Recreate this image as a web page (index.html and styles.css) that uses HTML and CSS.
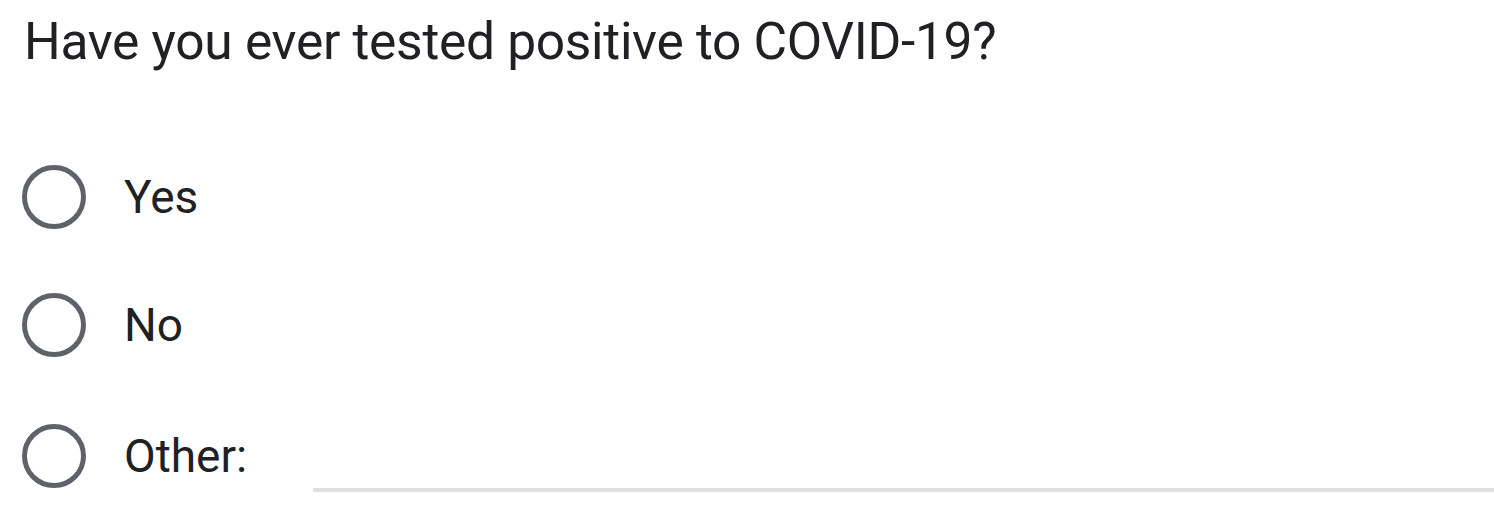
FILE: index.html
```html
<!DOCTYPE html>
<html>
<head>
<meta charset="utf-8">
<link rel="stylesheet" href="styles.css">
</head>
<body>
<div class="question">
  <div class="title">Have you ever tested positive to COVID-19?</div>
  <div class="options">
    <label class="option">
      <span class="radio"></span>
      <span class="label">Yes</span>
    </label>
    <label class="option">
      <span class="radio"></span>
      <span class="label">No</span>
    </label>
    <label class="option other">
      <span class="radio"></span>
      <span class="label">Other:</span>
      <span class="other-input"></span>
    </label>
  </div>
</div>
</body>
</html>
```

FILE: styles.css
```css
html, body {
  margin: 0;
  padding: 0;
  background: #ffffff;
}
body {
  font-family: Roboto, "Liberation Sans", sans-serif;
  color: #202124;
  width: 1494px;
  height: 530px;
  overflow: hidden;
}
.question {
  padding-left: 22px;
}
.title {
  font-size: 51.5px;
  line-height: 64px;
  padding-top: 10px;
  padding-left: 2px;
  letter-spacing: -0.3px;
}
.options {
  display: flex;
  flex-direction: column;
  margin-top: 91px;
}
.option {
  display: flex;
  align-items: center;
  height: 64px;
  margin-bottom: 64px;
}
.option.other {
  margin-top: 3px;
}
.radio {
  box-sizing: border-box;
  width: 64px;
  height: 64px;
  border: 5.5px solid #5f6368;
  border-radius: 50%;
  flex: none;
}
.label {
  font-size: 46px;
  margin-left: 38px;
  line-height: 64px;
}
.other-input {
  align-self: flex-end;
  flex: 1;
  height: 4px;
  background: #e0e0e0;
  margin-left: 66px;
  margin-bottom: -4px;
}
```
